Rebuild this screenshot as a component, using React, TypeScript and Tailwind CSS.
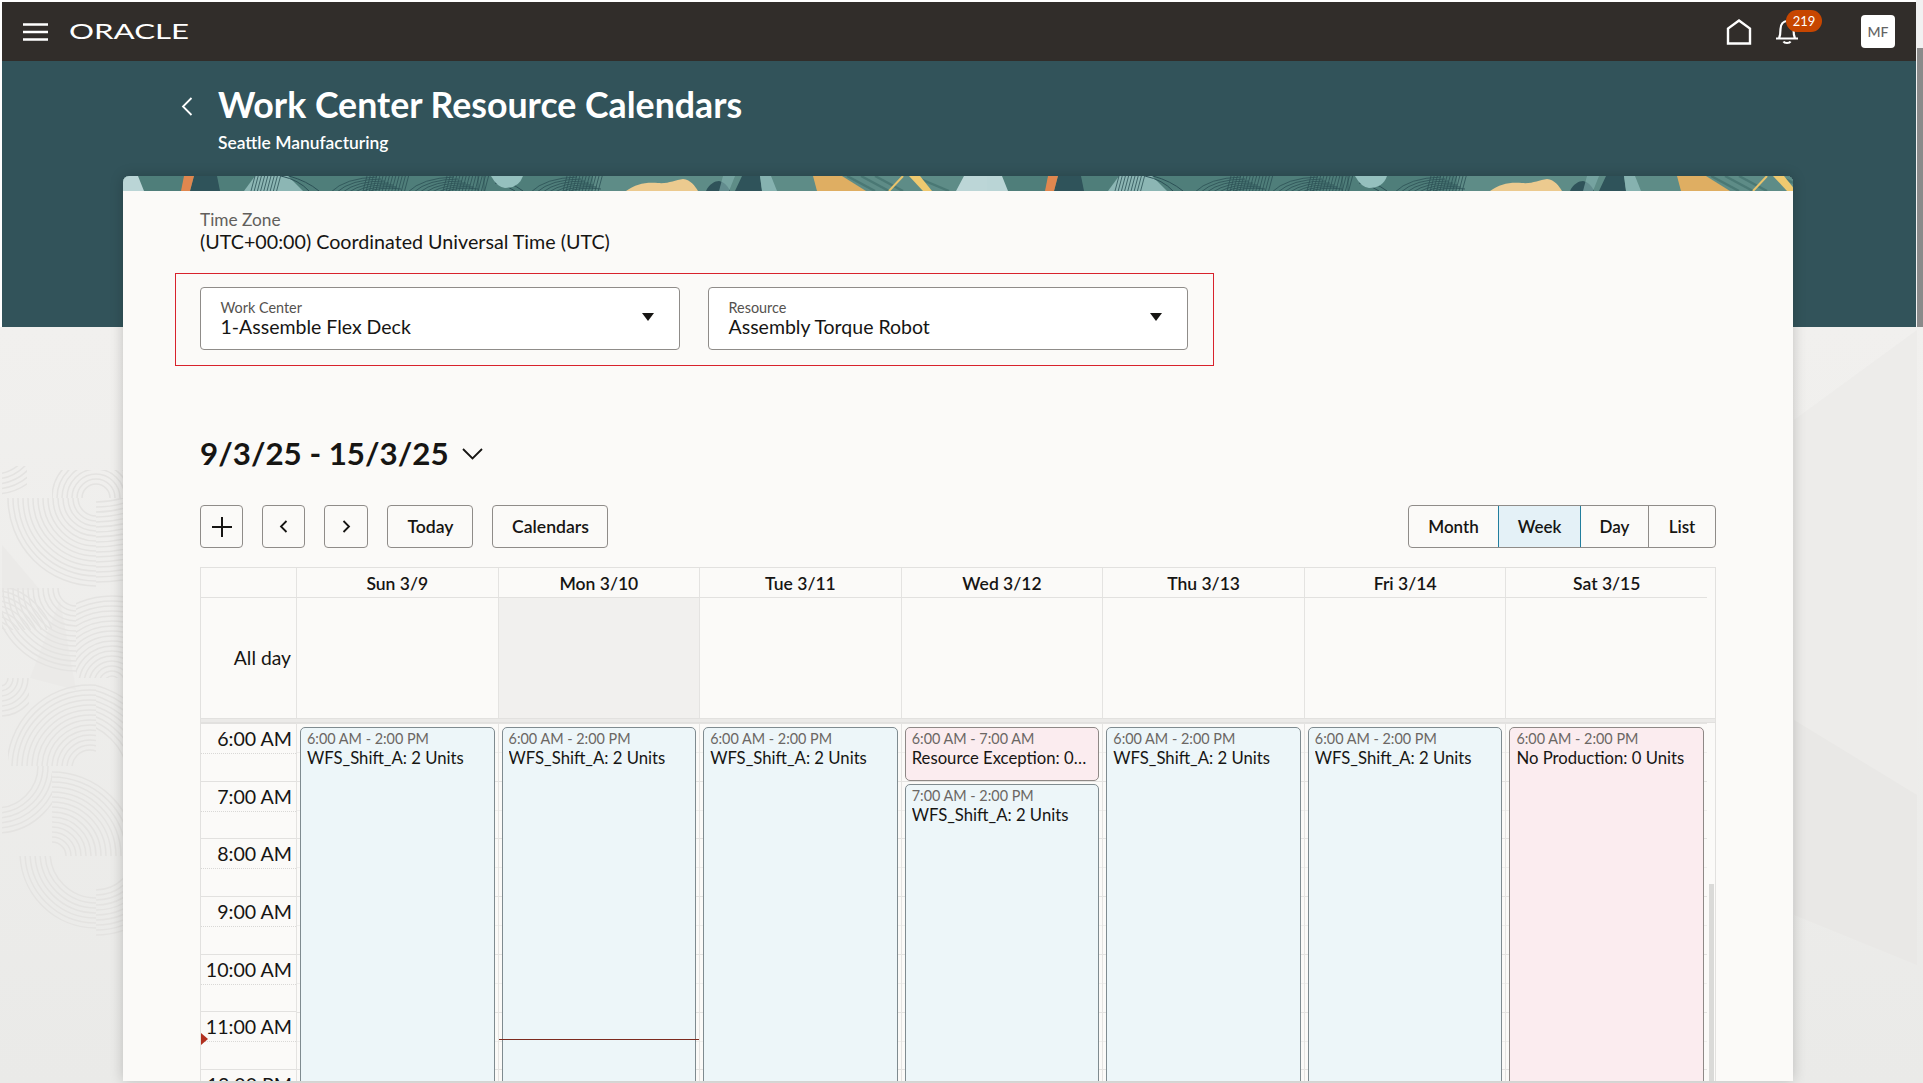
import React from "react";

const DAYS = ["Sun 3/9", "Mon 3/10", "Tue 3/11", "Wed 3/12", "Thu 3/13", "Fri 3/14", "Sat 3/15"];
const HOURS = ["6:00 AM", "7:00 AM", "8:00 AM", "9:00 AM", "10:00 AM", "11:00 AM", "12:00 PM"];

type P = { id: string; x: number; y: number; w: number; h: number; cx: number; cy: number; r0: number; r1: number };
const PATCHES: P[] = [
  { id: "a", x: 2, y: 466, w: 25, h: 32, cx: -6, cy: 436, r0: 38, r1: 62 },
  { id: "b", x: 52, y: 470, w: 71, h: 28, cx: 96, cy: 498, r0: 14, r1: 46 },
  { id: "c", x: 2, y: 498, w: 94, h: 90, cx: 96, cy: 498, r0: 18, r1: 92 },
  { id: "d", x: 96, y: 498, w: 27, h: 90, cx: 96, cy: 410, r0: 92, r1: 172 },
  { id: "e", x: 2, y: 588, w: 74, h: 90, cx: 76, cy: 588, r0: 18, r1: 84 },
  { id: "e2", x: 2, y: 588, w: 50, h: 42, cx: -10, cy: 650, r0: 20, r1: 66 },
  { id: "f", x: 76, y: 588, w: 47, h: 90, cx: 112, cy: 684, r0: 8, r1: 92 },
  { id: "g", x: 2, y: 678, w: 27, h: 88, cx: 0, cy: 678, r0: 8, r1: 42 },
  { id: "h", x: 8, y: 678, w: 88, h: 88, cx: 90, cy: 768, r0: 18, r1: 84 },
  { id: "i", x: 96, y: 678, w: 27, h: 88, cx: 70, cy: 780, r0: 58, r1: 98 },
  { id: "j", x: 2, y: 766, w: 50, h: 76, cx: -4, cy: 766, r0: 42, r1: 70 },
  { id: "k", x: 52, y: 766, w: 71, h: 90, cx: 52, cy: 856, r0: 14, r1: 88 },
  { id: "l", x: 8, y: 856, w: 88, h: 80, cx: 96, cy: 852, r0: 46, r1: 76 },
  { id: "m", x: 96, y: 856, w: 27, h: 86, cx: 96, cy: 852, r0: 38, r1: 84 },
];

function Backdrop() {
  return (
    <svg className="absolute left-[-2px] top-[-61px] pointer-events-none" width="1923" height="1083" viewBox="0 0 1923 1083">
      <defs>
        <linearGradient id="pg" x1="0" y1="327" x2="0" y2="1083" gradientUnits="userSpaceOnUse">
          <stop offset="0" stopColor="#f1f0ee" />
          <stop offset="1" stopColor="#eaeae8" />
        </linearGradient>
        {PATCHES.map((p) => (
          <clipPath id={`clip-${p.id}`} key={p.id}>
            <rect x={p.x} y={p.y} width={p.w} height={p.h} />
          </clipPath>
        ))}
      </defs>
      <rect x="0" y="327" width="1923" height="756" fill="url(#pg)" />
      <polygon points="1794,420 1917,330 1917,795 1794,720" fill="#edecea" />
      <polygon points="1794,720 1917,795 1917,965 1794,915" fill="#e9e8e6" />
      <polygon points="2,545 40,590 2,590" fill="#ebeae8" />
      <polygon points="60,600 76,690 30,678" fill="#ebeae8" />
      {PATCHES.map((p) => (
        <g key={p.id} clipPath={`url(#clip-${p.id})`} fill="none" stroke="#e4e3e1" strokeWidth="1.5">
          {Array.from({ length: Math.floor((p.r1 - p.r0) / 5) + 1 }, (_, i) => (
            <circle key={i} cx={p.cx} cy={p.cy} r={p.r0 + i * 5} />
          ))}
        </g>
      ))}
    </svg>
  );
}

function arcSet(x: number, n = 7) {
  return Array.from({ length: n }, (_, i) => (
    <path key={i} d={`M${x + i * 6} 16 Q${x + 14 + i * 6} ${2 + i * 1.4} ${x + 46 + i * 4} ${1 + i * 2}`} fill="none" stroke="#2c5056" strokeWidth="0.8" />
  ));
}
function hatch(x: number, n: number) {
  return Array.from({ length: n }, (_, i) => (
    <line key={i} x1={x + i * 3.2} y1="15" x2={x + 4 + i * 3.2} y2="0" stroke="#2c5056" strokeWidth="0.8" />
  ));
}

function BannerTile() {
  return (
    <g id="tile">
      <rect x="0" y="0" width="864" height="15" fill="#4f7e7a" />
      <rect x="470" y="0" width="394" height="15" fill="#5e8c87" />
      <polygon points="0,0 15,0 21,15 0,15" fill="#bad5d6" />
      <polygon points="71,0 94,0 97,15 67,15" fill="#2f535a" />
      <polygon points="61,0 71,0 67,15 58,15" fill="#e0874f" />
      <polygon points="132,0 165,0 180,15 121,15" fill="#8cb6b4" />
      {hatch(128, 9)}
      <path d="M158 0 Q176 4 186 15" fill="none" stroke="#2c5056" strokeWidth="1" />
      <path d="M166 0 Q184 5 196 15" fill="none" stroke="#2c5056" strokeWidth="1" />
      {arcSet(208)}
      {hatch(240, 14)}
      {arcSet(285)}
      {hatch(320, 14)}
      <line x1="355" y1="0" x2="355" y2="15" stroke="#2c5056" strokeWidth="0.6" />
      <line x1="361" y1="0" x2="361" y2="15" stroke="#2c5056" strokeWidth="0.6" />
      <path d="M370 2 Q388 6 400 15" fill="none" stroke="#2c5056" strokeWidth="1" />
      <path d="M372 7 Q384 9 392 15" fill="none" stroke="#2c5056" strokeWidth="1" />
      <path d="M368 0 H400 Q396 12 382 12 Q374 11 368 0Z" fill="#95c0be" />
      {arcSet(408)}
      {hatch(440, 12)}
      <path d="M503 15 C513 8 522 6 535 7 C545 8 552 4 560 3 C568 4 572 10 575 15Z" fill="#ecca8f" />
      <path d="M583 15 C586 8 592 5 596 5 C601 6 605 10 607 15Z" fill="#2f535a" />
      <polygon points="600,0 612,0 606,15 596,15" fill="#86b2b0" opacity="0.6" />
      <polygon points="619,0 637,0 639,15 612,15" fill="#2f535a" />
      <polygon points="637,0 648,0 654,15 639,15" fill="#86b2b0" />
      <polygon points="690,0 719,0 743,15 694,15" fill="#dfae62" />
      <g stroke="#4a7874" strokeWidth="2.4">
        <line x1="724" y1="0" x2="752" y2="15" />
        <line x1="738" y1="0" x2="766" y2="15" />
        <line x1="752" y1="0" x2="780" y2="15" />
        <line x1="790" y1="0" x2="826" y2="15" />
      </g>
      <line x1="766" y1="15" x2="780" y2="0" stroke="#e9c36b" strokeWidth="2" />
      <polygon points="786,0 797,0 809,15 800,15" fill="#efc96f" />
      <polygon points="841,0 880,0 886,15 833,15" fill="#bcd6d7" />
    </g>
  );
}

function Banner() {
  return (
    <svg className="block w-full h-[15px] shrink-0" viewBox="0 0 1670 15" preserveAspectRatio="none">
      <rect width="1670" height="15" fill="#4f7e7a" />
      <BannerTile />
      <use href="#tile" x="864" />
    </svg>
  );
}

function Caret() {
  return (
    <svg width="12" height="8" viewBox="0 0 12 8" className="shrink-0">
      <path d="M0 0H12L6 8Z" fill="#161513" />
    </svg>
  );
}

function SelectBox({ label, value }: { label: string; value: string }) {
  return (
    <div className="w-[480px] h-[63px] bg-white border border-[#8f8c89] rounded-[4px] flex items-center justify-between pl-[20px] pr-[25px]">
      <div className="flex flex-col">
        <span className="text-[14.4px] leading-[19px] text-[#55524f]">{label}</span>
        <span className="mt-[-1px] text-[19.5px] leading-[22px] text-[#161513]">{value}</span>
      </div>
      <div className="mt-[-3px]">
        <Caret />
      </div>
    </div>
  );
}

function IconButton({ w, children }: { w: string; children: React.ReactNode }) {
  return (
    <button className={`${w} h-[43px] border border-[#8f8c89] rounded-[4px] flex items-center justify-center text-[#161513]`}>
      {children}
    </button>
  );
}

function TextButton({ label, w }: { label: string; w: string }) {
  return (
    <button className={`${w} h-[43px] border border-[#8f8c89] rounded-[4px] pt-[1px] pl-[1px] text-[17.6px] font-semibold text-[#161513]`}>{label}</button>
  );
}

function EventCard({ time, title, pink, h }: { time: string; title: string; pink?: boolean; h: string }) {
  return (
    <div className={`${h} ${pink ? "bg-[#fbecef] border-[#8e8886]" : "bg-[#edf6f9] border-[#7f8b90]"} border rounded-[5px] pl-[6px] pr-[9px] pt-[2px] overflow-hidden shrink-0`}>
      <div className="text-[14.4px] leading-[18px] text-[#6b6764] whitespace-nowrap">{time}</div>
      <div className="text-[16.7px] leading-[20px] text-[#161513] whitespace-nowrap overflow-hidden text-ellipsis">{title}</div>
    </div>
  );
}

const LINES =
  "bg-[repeating-linear-gradient(to_bottom,#e4e3e1_0,#e4e3e1_1px,transparent_1px,transparent_29px,#efeeec_29px,#efeeec_30px,transparent_30px,transparent_57.7px)]";

function DayColumn({ index }: { index: number }) {
  return (
    <div className={`relative border-l border-[#e4e3e1] pl-[3px] pr-[3px] pt-[4px] flex flex-col gap-[3px] overflow-hidden ${LINES}`}>
      {index === 3 ? (
        <>
          <EventCard pink h="h-[54px]" time="6:00 AM - 7:00 AM" title="Resource Exception: 0 Units" />
          <EventCard h="h-[420px]" time="7:00 AM - 2:00 PM" title="WFS_Shift_A: 2 Units" />
        </>
      ) : index === 6 ? (
        <EventCard pink h="h-[470px]" time="6:00 AM - 2:00 PM" title="No Production: 0 Units" />
      ) : (
        <EventCard h="h-[470px]" time="6:00 AM - 2:00 PM" title="WFS_Shift_A: 2 Units" />
      )}
      {index === 1 && <div className="absolute left-0 right-0 top-[316px] h-[1px] bg-[#7c2a1f]" />}
    </div>
  );
}

function CalendarGrid() {
  return (
    <div className="flex-1 min-h-0 mt-[19px] border-x border-t border-[#e2e1df] flex flex-col overflow-hidden">
      <div className="flex shrink-0">
        <div className="flex-1 min-w-0">
          <div className="grid grid-cols-[95px_repeat(7,minmax(0,1fr))] h-[30px] border-b border-[#e2e1df]">
            <div />
            {DAYS.map((d) => (
              <div key={d} className="border-l border-[#e4e3e1] flex items-center justify-center text-[17.5px] font-semibold text-[#161513] pt-[3px]">
                {d}
              </div>
            ))}
          </div>
          <div className="grid grid-cols-[95px_repeat(7,minmax(0,1fr))] h-[120px]">
            <div className="flex items-center justify-end pr-[5px] text-[19.3px] text-[#161513]">All day</div>
            {DAYS.map((d, i) => (
              <div key={d} className={`border-l border-[#e4e3e1] ${i === 1 ? "bg-[#f1f0ee]" : ""}`} />
            ))}
          </div>
        </div>
        <div className="w-[8px]" />
      </div>
      <div className="h-[5px] shrink-0 bg-[#ebeae8] border-y border-[#e2e1df]" />
      <div className="flex flex-1 min-h-0">
        <div className="flex-1 min-w-0 grid grid-cols-[95px_repeat(7,minmax(0,1fr))] overflow-hidden">
          <div className="relative">
            {HOURS.map((h) => (
              <div key={h} className="h-[57.7px] border-t border-[#e2e1df] relative">
                <div className="h-[30px] border-b border-dotted border-[#d9d8d6] flex items-center justify-end pr-[4px] text-[19.6px] text-[#161513] whitespace-nowrap">
                  {h}
                </div>
              </div>
            ))}
            <svg className="absolute left-0 top-[310px]" width="7" height="12" viewBox="0 0 7 12">
              <path d="M0 0L7 6L0 12Z" fill="#b1301f" />
            </svg>
          </div>
          {DAYS.map((d, i) => (
            <DayColumn key={d} index={i} />
          ))}
        </div>
        <div className="w-[8px] shrink-0 pl-[2px] pr-[1px] pt-[161px]">
          <div className="w-[5px] h-full bg-[#dadad8]" />
        </div>
      </div>
    </div>
  );
}

export default function App() {
  return (
    <div className="w-[1923px] h-[1083px] overflow-hidden bg-white flex py-[2px] pl-[2px] font-['Lato',sans-serif]">
      <div className="flex-1 min-w-0 flex flex-col">
        <header className="h-[59px] shrink-0 bg-[#312d2a] flex items-center pl-[21px] pr-[21px]">
          <svg width="25" height="18" viewBox="0 0 25 18" className="shrink-0">
            <path d="M0 1.5H25M0 9H25M0 16.5H25" stroke="#fff" strokeWidth="2.6" />
          </svg>
          <span className="ml-[21px] mt-[-2px] inline-block w-[120px] origin-left scale-x-[1.42] text-[22px] leading-[21px] font-normal text-white">
            ORACLE
          </span>
          <div className="flex-1" />
          <svg width="26" height="26" viewBox="0 0 26 26" className="shrink-0 mt-[1px]">
            <path d="M2 24.5V9.5L13 1.5L24 9.5V24.5Z" fill="none" stroke="#fff" strokeWidth="2.4" />
          </svg>
          <div className="relative w-[24px] h-[26px] ml-[23px] mt-[1px] shrink-0">
            <svg width="24" height="26" viewBox="0 0 24 26">
              <path d="M1 19.5H23M4 19.5C5.5 16 5.5 14 5.5 10C5.5 5 8.5 2 12 2C15.5 2 18.5 5 18.5 10C18.5 14 18.5 16 20 19.5" fill="none" stroke="#fff" strokeWidth="2.2" />
              <path d="M8.5 22.5C9.5 24.5 14.5 24.5 15.5 22.5" fill="none" stroke="#fff" strokeWidth="2.2" />
            </svg>
            <span className="absolute left-[11px] top-[-9px] w-[36px] h-[22px] rounded-[11px] bg-[#c74600] text-white text-[13px] leading-[22px] text-center">219</span>
          </div>
          <div className="ml-[62px] w-[34px] h-[33px] bg-white rounded-[4px] flex items-center justify-center text-[14px] font-medium text-[#646464]">MF</div>
        </header>

        <div className="relative flex-1 min-h-0 flex flex-col bg-[linear-gradient(#32535a_266px,transparent_266px)]">
          <Backdrop />
          <div className="relative h-[115px] shrink-0 flex pl-[179px] pt-[20px]">
            <svg width="12" height="19" viewBox="0 0 12 19" className="mt-[16px] shrink-0">
              <path d="M10.5 1L2 9.5L10.5 18" fill="none" stroke="#fff" strokeWidth="1.8" />
            </svg>
            <div className="ml-[25px]">
              <h1 className="text-[35.7px] leading-[48px] font-bold text-white whitespace-nowrap">Work Center Resource Calendars</h1>
              <p className="text-[17.4px] leading-[22px] mt-[3px] font-semibold text-white whitespace-nowrap">Seattle Manufacturing</p>
            </div>
          </div>

          <main className="relative ml-[121px] w-[1670px] flex-1 min-h-0 flex flex-col rounded-t-[6px] overflow-hidden bg-[#fbfaf8] shadow-[0_0_14px_rgba(0,0,0,0.2)]">
            <Banner />
            <div className="flex-1 min-h-0 flex flex-col pl-[77px] pr-[77px] pt-[18px]">
              <div className="text-[17.3px] leading-[22px] text-[#625f5c]">Time Zone</div>
              <div className="text-[19.7px] leading-[22px] text-[#161513]">(UTC+00:00) Coordinated Universal Time (UTC)</div>

              <div className="ml-[-25px] mt-[20px] w-[1039px] h-[93px] shrink-0 border-[1.5px] border-[#d8222c] pl-[23.5px] pt-[12.5px] flex gap-[28px]">
                <SelectBox label="Work Center" value="1-Assemble Flex Deck" />
                <SelectBox label="Resource" value="Assembly Torque Robot" />
              </div>

              <div className="mt-[67px] h-[40px] shrink-0 flex items-center text-[#161513]">
                <h2 className="text-[31.3px] leading-[40px] font-bold whitespace-nowrap">9/3/25 - 15/3/25</h2>
                <svg width="21" height="12" viewBox="0 0 21 12" className="ml-[13px] mt-[2px]">
                  <path d="M1 1L10.5 10.5L20 1" fill="none" stroke="#161513" strokeWidth="1.8" />
                </svg>
              </div>

              <div className="mt-[32px] flex items-center shrink-0">
                <div className="flex gap-[19px]">
                  <IconButton w="w-[43px]">
                    <svg width="20" height="20" viewBox="0 0 20 20">
                      <path d="M10 0V20M0 10H20" stroke="#161513" strokeWidth="2" />
                    </svg>
                  </IconButton>
                  <IconButton w="w-[43px]">
                    <svg width="9" height="13" viewBox="0 0 9 13">
                      <path d="M7.5 1L2 6.5L7.5 12" fill="none" stroke="#161513" strokeWidth="1.8" />
                    </svg>
                  </IconButton>
                  <IconButton w="w-[44px]">
                    <svg width="9" height="13" viewBox="0 0 9 13">
                      <path d="M1.5 1L7 6.5L1.5 12" fill="none" stroke="#161513" strokeWidth="1.8" />
                    </svg>
                  </IconButton>
                  <TextButton label="Today" w="w-[86px]" />
                  <TextButton label="Calendars" w="w-[116px]" />
                </div>
                <div className="flex-1" />
                <div className="flex h-[43px] border border-[#8f8c89] rounded-[4px] text-[17px] font-semibold text-[#161513] overflow-hidden">
                  <div className="w-[89px] flex items-center justify-center">Month</div>
                  <div className="w-[83px] flex items-center justify-center bg-[#e4f1f7] border border-[#227e9e] my-[-1px]">Week</div>
                  <div className="w-[68px] flex items-center justify-center border-r border-[#8f8c89]">Day</div>
                  <div className="w-[66px] flex items-center justify-center">List</div>
                </div>
              </div>

              <CalendarGrid />
            </div>
          </main>
        </div>
      </div>

      <div className="w-[7px] shrink-0 pl-[1px] bg-[#f1f1f1] mt-[-2px] mb-[-2px] pt-[48px]">
        <div className="h-[792px] bg-[#8a8a8a] rounded-b-[2px]" />
      </div>
    </div>
  );
}
